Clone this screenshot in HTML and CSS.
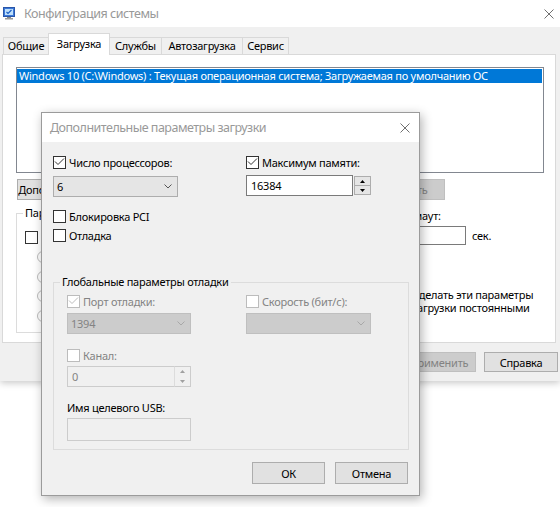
FILE: index.html
```html
<!DOCTYPE html>
<html lang="ru">
<head>
<meta charset="utf-8">
<title>Конфигурация системы</title>
<link rel="stylesheet" href="styles.css">
</head>
<body>
<div class="win main">
  <div class="titlebar">
    <svg class="appicon" width="12" height="13" viewBox="0 0 12 13">
      <rect x="0.5" y="0.5" width="11" height="9" fill="#3b78d8" stroke="#2a56a8"/>
      <rect x="2" y="2" width="8" height="6" fill="#bfe0fb"/>
      <polyline points="3.5,5 5,6.5 8.5,3" fill="none" stroke="#1d5fc4" stroke-width="1.2"/>
      <rect x="4" y="10" width="4" height="1" fill="#888"/>
      <rect x="2" y="11" width="8" height="1.5" fill="#9a9a9a"/>
    </svg>
    <span class="title">Конфигурация системы</span>
    <svg class="close" width="10" height="10" viewBox="0 0 10 10"><path d="M0.5 0.5L9.5 9.5M9.5 0.5L0.5 9.5" stroke="#707070" stroke-width="1" fill="none"/></svg>
  </div>
  <div class="tabs">
    <div class="tab">Общие</div>
    <div class="tab active">Загрузка</div>
    <div class="tab">Службы</div>
    <div class="tab">Автозагрузка</div>
    <div class="tab">Сервис</div>
  </div>
  <div class="panel">
    <div class="listbox">
      <div class="lbitem">Windows 10 (C:\Windows) : Текущая операционная система; Загружаемая по умолчанию ОС</div>
    </div>
    <div class="btnrow">
      <button class="btn b-adv">Дополнительные параметры...</button>
      <button class="btn b-def"></button>
      <button class="btn dis b-del">Удалить</button>
    </div>
    <div class="bootrow">
      <fieldset class="group bootgroup">
        <legend>Параметры загрузки</legend>
        <div class="chk"><span class="box"></span></div>
        <div class="radios">
          <div class="radio"><span class="rb"></span></div>
          <div class="radio"><span class="rb"></span></div>
          <div class="radio"><span class="rb"></span></div>
          <div class="radio"><span class="rb"></span></div>
        </div>
      </fieldset>
      <div class="rightcol">
        <div class="tlabel">Таймаут:</div>
        <div class="trow"><span class="textbox tbox"></span><span class="sec">сек.</span></div>
        <label class="chk perm"><span class="box"></span><span class="permtext">Сделать эти параметры<br>загрузки постоянными</span></label>
      </div>
    </div>
  </div>
  <div class="footer">
    <button class="btn fbtn"></button>
    <button class="btn fbtn"></button>
    <button class="btn fbtn dis">Применить</button>
    <button class="btn fbtn">Справка</button>
  </div>
</div>

<div class="win dlg">
  <div class="titlebar dtitle">
    <span class="title">Дополнительные параметры загрузки</span>
    <svg class="close" width="10" height="10" viewBox="0 0 10 10"><path d="M0.5 0.5L9.5 9.5M9.5 0.5L0.5 9.5" stroke="#707070" stroke-width="1" fill="none"/></svg>
  </div>
  <div class="dbody">
    <div class="cols">
      <div class="col">
        <label class="chk"><span class="box"><svg class="tick" width="11" height="11" viewBox="0 0 11 11"><polyline points="1,4.5 4,7.5 10,1.5" fill="none" stroke="#333" stroke-width="1"/></svg></span><span>Число процессоров:</span></label>
        <div class="combo cpu"><span class="cval">6</span><svg class="chev" width="8" height="5" viewBox="0 0 8 5"><polyline points="0.5,0.5 4,4 7.5,0.5" fill="none" stroke="#555" stroke-width="1"/></svg></div>
        <label class="chk pci"><span class="box"></span><span>Блокировка PCI</span></label>
        <label class="chk dbg"><span class="box"></span><span>Отладка</span></label>
      </div>
      <div class="col">
        <label class="chk"><span class="box"><svg class="tick" width="11" height="11" viewBox="0 0 11 11"><polyline points="1,4.5 4,7.5 10,1.5" fill="none" stroke="#333" stroke-width="1"/></svg></span><span>Максимум памяти:</span></label>
        <div class="spin mem">
          <span class="spinval">16384</span>
          <span class="spinbtns">
            <span class="sb"><svg width="5" height="3" viewBox="0 0 5 3"><polygon points="0,3 5,3 2.5,0" fill="#000"/></svg></span>
            <span class="sb"><svg width="5" height="3" viewBox="0 0 5 3"><polygon points="0,0 5,0 2.5,3" fill="#000"/></svg></span>
          </span>
        </div>
      </div>
    </div>
    <fieldset class="group dgroup">
      <legend>Глобальные параметры отладки</legend>
      <div class="cols2">
        <div class="col">
          <label class="chk dis"><span class="box"><svg class="tick" width="11" height="11" viewBox="0 0 11 11"><polyline points="1,4.5 4,7.5 10,1.5" fill="none" stroke="#bcbcbc" stroke-width="1"/></svg></span><span>Порт отладки:</span></label>
          <div class="combo dis port"><span class="cval">1394</span><svg class="chev" width="8" height="5" viewBox="0 0 8 5"><polyline points="0.5,0.5 4,4 7.5,0.5" fill="none" stroke="#a8a8a8" stroke-width="1"/></svg></div>
          <label class="chk dis chan"><span class="box"></span><span>Канал:</span></label>
          <div class="spin dis chanspin">
            <span class="spinval">0</span>
            <span class="spinbtns">
              <span class="sb"><svg width="5" height="3" viewBox="0 0 5 3"><polygon points="0,3 5,3 2.5,0" fill="#a0a0a0"/></svg></span>
              <span class="sb"><svg width="5" height="3" viewBox="0 0 5 3"><polygon points="0,0 5,0 2.5,3" fill="#a0a0a0"/></svg></span>
            </span>
          </div>
          <div class="usblabel">Имя целевого USB:</div>
          <div class="textbox dis usb"></div>
        </div>
        <div class="col">
          <label class="chk dis"><span class="box"></span><span>Скорость (бит/с):</span></label>
          <div class="combo dis baud"><span class="cval"></span><svg class="chev" width="8" height="5" viewBox="0 0 8 5"><polyline points="0.5,0.5 4,4 7.5,0.5" fill="none" stroke="#a8a8a8" stroke-width="1"/></svg></div>
        </div>
      </div>
    </fieldset>
    <div class="dfoot">
      <button class="btn dbtn">ОК</button>
      <button class="btn dbtn">Отмена</button>
    </div>
  </div>
</div>
</body>
</html>
```

FILE: styles.css
```css
* { box-sizing: border-box; }
html, body { margin: 0; padding: 0; }
body {
  width: 560px;
  height: 507px;
  overflow: hidden;
  position: relative;
  background: #ffffff;
  font-family: "Noto Sans", "DejaVu Sans", sans-serif;
  font-size: 11px;
  letter-spacing: -0.25px;
  color: #000;
}

.win { position: absolute; }

/* ---------- main window ---------- */
.main {
  left: 0;
  top: 0;
  width: 560px;
  height: 381px;
  background: #f0f0f0;
  box-shadow: 0 2px 7px rgba(0,0,0,0.22);
}
.titlebar {
  height: 27px;
  background: #fff;
  display: flex;
  align-items: center;
}
.appicon { margin-left: 3px; flex: none; }
.title {
  color: #999;
  font-size: 12.5px;
  letter-spacing: -0.45px;
  margin-left: 9px;
  white-space: nowrap;
}
.close { margin-left: auto; margin-right: 6px; flex: none; }

.tabs {
  height: 27px;
  display: flex;
  align-items: flex-end;
  padding-left: 3px;
  position: relative;
  z-index: 1;
}
.tab {
  height: 17px;
  border: 1px solid #d9d9d9;
  border-bottom: none;
  background: #f0f0f0;
  text-align: center;
  line-height: 16px;
  white-space: nowrap;
  margin-left: -1px;
}
.tab:nth-child(1) { width: 46px; margin-left: 0; }
.tab:nth-child(2) { width: 62px; }
.tab:nth-child(3) { width: 53px; }
.tab:nth-child(4) { width: 82px; }
.tab:nth-child(5) { width: 47px; }
.tab.active {
  height: 22px;
  background: #fff;
  margin-bottom: -1px;
  padding-top: 2px;
  position: relative;
  z-index: 2;
}

.panel {
  margin-left: 2px;
  width: 554px;
  height: 289px;
  background: #fff;
  border: 1px solid #d9d9d9;
  padding: 12px 11px 0 13px;
}
.listbox {
  height: 106px;
  border: 1px solid #828790;
  background: #fff;
  padding: 1px 1px 0 0;
}
.lbitem {
  height: 14px;
  line-height: 14px;
  background: #0078d7;
  color: #fff;
  padding-left: 2px;
  white-space: nowrap;
  overflow: hidden;
}

.btn {
  font: inherit;
  letter-spacing: inherit;
  color: #000;
  background: #e1e1e1;
  border: 1px solid #adadad;
  padding: 0;
  margin: 0;
  white-space: nowrap;
  overflow: hidden;
}
.btn.dis {
  background: #cccccc;
  border-color: #bfbfbf;
  color: #838383;
}
.btnrow {
  display: flex;
  margin-top: 6px;
  height: 21px;
  padding-left: 1px;
}
.b-adv { width: 160px; }
.b-def { width: 160px; margin-left: 8px; }
.b-del { width: 76px; margin-left: auto; margin-right: 99px; }

.bootrow {
  display: flex;
  margin-top: 6px;
}
.group {
  margin: 0;
  border: 1px solid #dcdcdc;
  min-width: 0;
}
.group legend {
  padding: 0 2px;
  line-height: 14px;
  white-space: nowrap;
}
.bootgroup {
  width: 340px;
  height: 127px;
  padding: 11px 8px 0 8px;
}
.bootgroup legend { margin-left: -2px; }

.chk {
  display: flex;
  align-items: center;
  height: 13px;
  white-space: nowrap;
}
.box {
  display: block;
  flex: none;
  width: 13px;
  height: 13px;
  border: 1px solid #333;
  background: #fff;
  margin-right: 3px;
}
.tick { display: block; }
.chk.dis { color: #838383; }
.chk.dis .box { border-color: #bcbcbc; }

.radios { margin-top: 7px; padding-left: 12px; }
.radio {
  display: flex;
  align-items: flex-start;
  height: 19.5px;
}
.rb {
  flex: none;
  width: 12px;
  height: 12px;
  border: 1px solid #bcbcbc;
  border-radius: 50%;
  background: #fff;
}

.rightcol {
  margin-left: 40px;
  display: flex;
  flex-direction: column;
}
.tlabel { line-height: 16px; margin-top: 2px; }
.trow {
  display: flex;
  align-items: center;
  margin-top: 2px;
}
.textbox {
  display: block;
  border: 1px solid #7a7a7a;
  background: #fff;
}
.tbox {
  width: 70px;
  height: 19px;
}
.sec { margin-left: 6px; }
.perm {
  margin-top: 43px;
  height: auto;
  align-items: flex-start;
}
.permtext { line-height: 13px; }

.footer {
  display: flex;
  justify-content: flex-end;
  margin-top: 9px;
  padding-right: 2px;
  gap: 8px;
}
.fbtn { width: 74px; height: 20px; }

/* ---------- dialog ---------- */
.dlg {
  left: 41px;
  top: 112px;
  width: 379px;
  height: 384px;
  background: #f0f0f0;
  border: 1px solid #9b9b9b;
  box-shadow: 2px 3px 10px rgba(0,0,0,0.3);
}
.dtitle { height: 29px; }
.dtitle .title { margin-left: 8px; letter-spacing: -0.5px; }
.dtitle .close { margin-right: 9px; }

.dbody { padding: 14px 10px 11px 11px; }
.cols {
  display: grid;
  grid-template-columns: 193px auto;
}
.combo {
  display: flex;
  align-items: center;
  height: 21px;
  border: 1px solid #adadad;
  background: #e5e5e5;
  padding-left: 3px;
  padding-right: 5px;
}
.chev { margin-left: auto; display: block; }
.cpu { width: 125px; margin-top: 7px; }
.pci { margin-top: 13px; }
.dbg { margin-top: 6px; }

.spin {
  display: flex;
  height: 21px;
}
.spinval {
  display: flex;
  align-items: center;
  flex: 1;
  border: 1px solid #7a7a7a;
  background: #fff;
  padding-left: 4px;
}
.spinbtns {
  width: 18px;
  display: flex;
  flex-direction: column;
  gap: 0;
  padding: 1px 0 1px 1px;
}
.sb {
  flex: 1;
  display: flex;
  align-items: center;
  justify-content: center;
  border: 1px solid #adadad;
  background: #e5e5e5;
}
.sb + .sb { border-top: none; }
.sb svg { display: block; }
.mem { width: 125px; margin-top: 6px; }

.dgroup {
  margin-top: 33px;
  width: 356px;
  padding: 6px 0 8px 13px;
}
.dgroup legend { margin-left: -7px; }
.cols2 {
  display: grid;
  grid-template-columns: 179px auto;
}
.combo.dis {
  background: #cccccc;
  border-color: #bfbfbf;
  color: #838383;
}
.port { width: 124px; margin-top: 5px; }
.baud { width: 125px; margin-top: 5px; }
.chan { margin-top: 15px; }
.chanspin { width: 124px; margin-top: 4px; }
.spin.dis .spinval {
  background: #f0f0f0;
  border-color: #cccccc;
  border-right: none;
  color: #838383;
}
.spin.dis .spinbtns {
  border: 1px solid #cccccc;
  border-left-color: #dcdcdc;
  width: 17px;
  padding: 0;
}
.spin.dis .sb { border: none; background: #f0f0f0; }
.usblabel { margin-top: 13px; line-height: 16px; }
.textbox.dis {
  background: #f0f0f0;
  border-color: #cccccc;
}
.usb { width: 124px; height: 23px; margin-top: 2px; }

.dfoot {
  display: flex;
  justify-content: flex-end;
  gap: 10px;
  margin-top: 12px;
  margin-right: 1px;
}
.dbtn { width: 73px; height: 22px; }
```
